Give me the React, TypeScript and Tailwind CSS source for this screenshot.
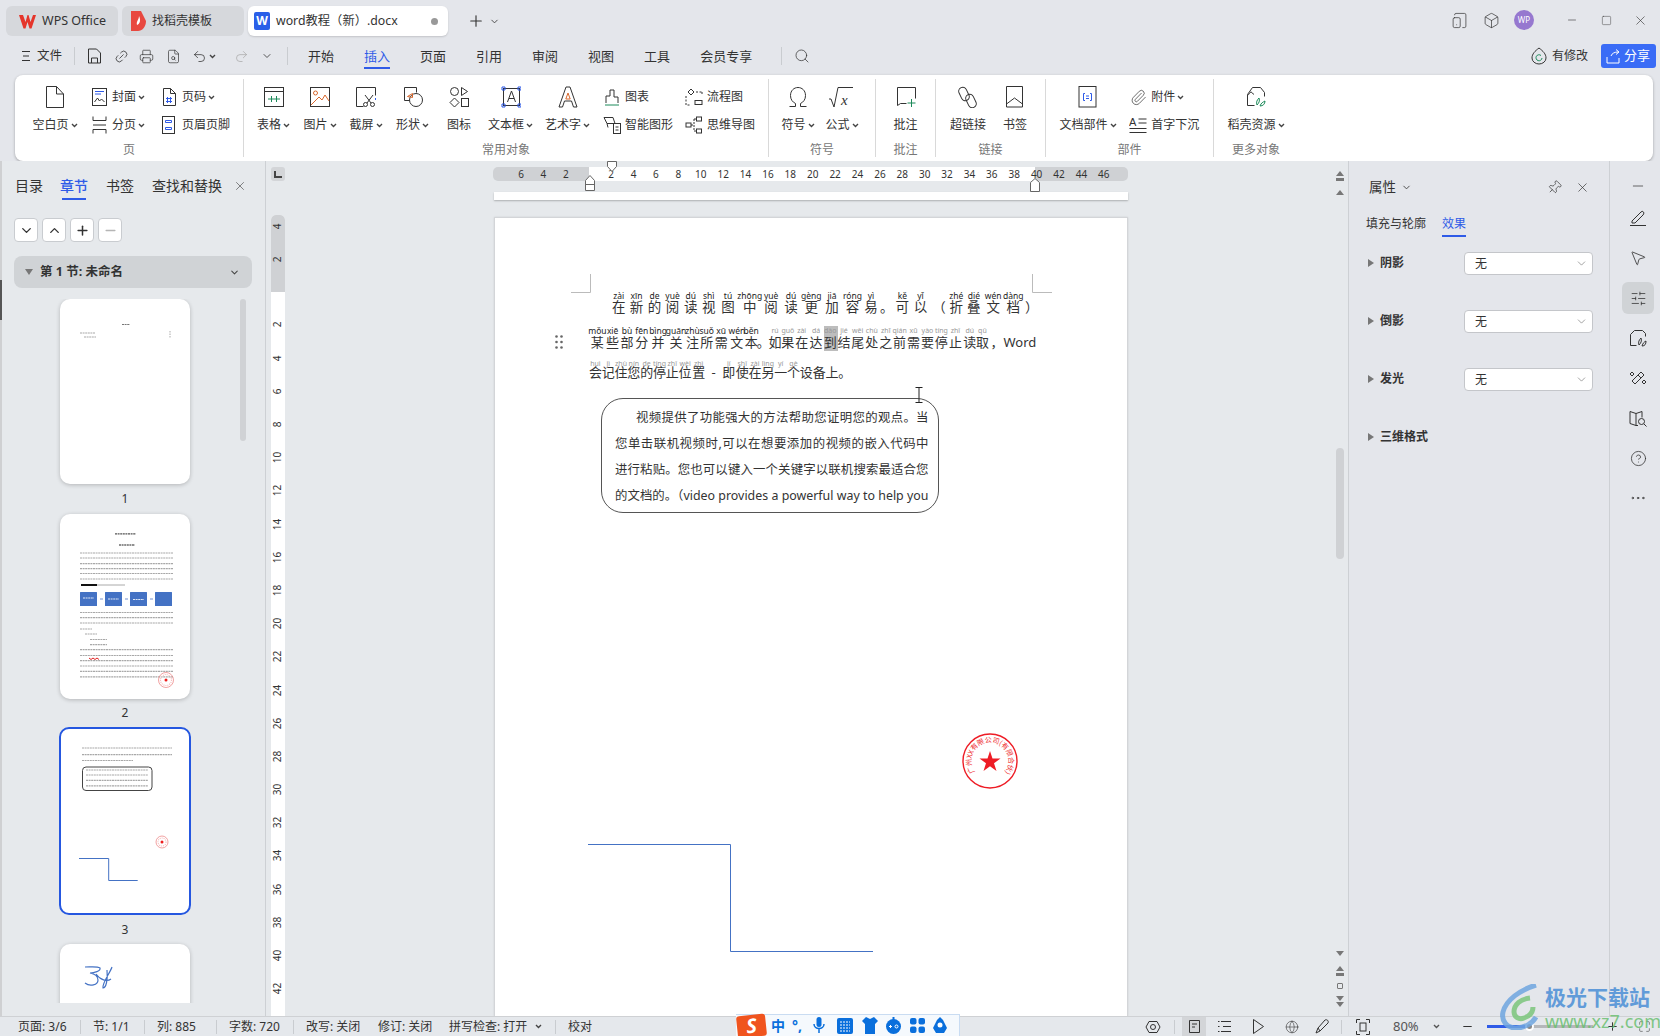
import { ReactNode } from "react"
import {
  Box, ChevronDown, ChevronUp, CircleHelp, Ellipsis, FileSearch, Globe, Link2, Maximize, Minus, MousePointer2,
  Paperclip, Pin, Plus, Printer, Redo2, Search, SlidersHorizontal, Square, TabletSmartphone, Undo2, X,
} from "lucide-react"

const PAGE_LEFT = 495
const BLUE = "#2f5be7"

const Caret = ({ color = "#444" }: { color?: string }) => (
  <svg width="7" height="5" viewBox="0 0 7 5" fill="none" stroke={color} strokeWidth="1.4" className="ml-[2px] shrink-0">
    <path d="M1 1l2.5 2.5L6 1" />
  </svg>
)

const Ic = ({ w = 20, h = 22, children }: { w?: number; h?: number; children: ReactNode }) => (
  <svg width={w} height={h} viewBox={`0 0 ${w} ${h}`} fill="none" stroke="#333" strokeWidth="1" className="shrink-0">
    {children}
  </svg>
)

// ribbon icons, large ones
const big: Record<string, ReactNode> = {
  blank: <Ic><path d="M1.5 .5h10l7 7.5v13.5h-17z M11.5 .5v7.5h7" /></Ic>,
  table: (
    <Ic>
      <rect x=".5" y="1.5" width="19" height="19" />
      <path d="M.5 5.5h19" />
      <path d="M4 13h12M7.5 10v6M12.5 10v6" stroke="#1c8a5a" />
    </Ic>
  ),
  picture: (
    <Ic>
      <rect x=".5" y="1.5" width="19" height="19" />
      <circle cx="5.5" cy="7" r="2" stroke="#d8672c" />
      <path d="M1 19l8-8 3 3 3-5 4 6" stroke="#d8672c" />
    </Ic>
  ),
  shot: (
    <Ic>
      <path d="M.5 20.5v-19h19v8M.5 20.5h7" />
      <path d="M19.5 12v3" strokeDasharray="2 1" stroke="#2f5be7" />
      <path d="M9 9l6 8M17 9l-6 8" />
      <circle cx="9.5" cy="18.5" r="2" />
      <circle cx="16.5" cy="18.5" r="2" />
    </Ic>
  ),
  shape: (
    <Ic>
      <path d="M1.5 1.5h12v5M1.5 1.5v13h5" />
      <circle cx="13" cy="14" r="6.5" />
      <path d="M4.5 10.5l5-3v4z" stroke="#d8672c" />
    </Ic>
  ),
  icon: (
    <Ic>
      <circle cx="5.5" cy="5.5" r="4" />
      <path d="M12.5 1.5l6 4-6 4z" />
      <path d="M5.5 12l4.5 4.5-4.5 4.5-4.5-4.5z" />
      <rect x="12.5" y="12.5" width="7" height="8" />
    </Ic>
  ),
  textbox: (
    <Ic>
      <rect x="2.5" y="2.5" width="16" height="17" />
      <path d="M6.5 16L10.5 5l4 11M8 12.5h5" />
      <path d="M1 1h3v3H1zM17 1h3v3h-3zM1 18h3v3H1zM17 18h3v3h-3z" stroke={BLUE} />
    </Ic>
  ),
  art: (
    <Ic>
      <path d="M1 21L8 1h4l7 20h-3.5l-2-6h-7l-2 6z" />
      <path d="M10 7l2.2 6H7.800z" stroke="#d8672c" />
    </Ic>
  ),
  omega: (
    <Ic>
      <path d="M1.500 20.500h6v-3c-3-1.500-5-4-5-8 0-5 3.500-8 7.500-8s7.500 3 7.500 8c0 4-2 6.500-5 8v3h6" />
    </Ic>
  ),
  formula: (
    <Ic w={26}>
      <path d="M0 13h2l3 8L9 1.500h15" />
      <text x="12" y="19" fontSize="15" fontStyle="italic" fontFamily="Liberation Serif" fill="#333" stroke="none">x</text>
    </Ic>
  ),
  comment: (
    <Ic>
      <path d="M1.500 19.500v-18h18v11M1.500 19.500l3-2h6" />
      <path d="M15.500 13v8M11.500 17h8" stroke="#1c8a5a" />
    </Ic>
  ),
  link: (
    <Ic>
      <rect x="2" y="1" width="8" height="14" rx="4" transform="rotate(-25 6 8)" />
      <rect x="9" y="8" width="8" height="14" rx="4" transform="rotate(-25 13 15)" />
    </Ic>
  ),
  bookmark: <Ic><path d="M1.500 .5h16v20.500h-16z M1.500 18l8-6 8 6" /></Ic>,
  part: (
    <Ic>
      <rect x="1" y=".5" width="17" height="20.500" />
      <path d="M7 7.500H5.500v7H7M12 7.500h1.500v7H12M8 10h3M8 12.500h3" stroke={BLUE} />
    </Ic>
  ),
  shell: (
    <Ic>
      <path d="M1.500 19.500v-11l5-7h8l4 5v4M1.500 19.500h7M1.500 9c2 0 2-3 3.500-3s1.500 3 3 2" />
      <path d="M11 19c-1-3 0-5 2-7 1 3 0 5-2 7zM14 20c1-3 3-4 5-5 0 3-2 5-5 5z" stroke="#1c8a5a" />
    </Ic>
  ),
}

// ribbon icons, small ones
const small: Record<string, ReactNode> = {
  cover: (
    <Ic w={15} h={18}>
      <rect x=".5" y=".5" width="14" height="17" />
      <path d="M3 3.500h9M3 6h6" stroke={BLUE} />
      <path d="M2.500 14l3-4 2 3 2-2 3 3" />
    </Ic>
  ),
  pagebreak: (
    <Ic w={15} h={18}>
      <path d="M1 .5v4h13v-4M1 17.500v-4h13v4" />
      <path d="M1 9h13" />
    </Ic>
  ),
  pageno: (
    <Ic w={15} h={18}>
      <path d="M1.500 .5h7l5 5v12h-12zM8.500 .5v5h5" />
      <path d="M5.500 9v6M8.500 9v6M4 10.500h6M4 13.500h6" stroke={BLUE} />
    </Ic>
  ),
  header: (
    <Ic w={15} h={18}>
      <rect x="1.500" y=".5" width="12" height="17" />
      <path d="M4.500 4.500h6v2h-6zM4.500 11.500h6v2h-6z" stroke={BLUE} />
    </Ic>
  ),
  chart: (
    <Ic w={16} h={18}>
      <path d="M2 15V8h4V2h4v7h4v6" />
      <path d="M1 17h14" stroke="#1c8a5a" />
    </Ic>
  ),
  smart: (
    <Ic w={18} h={18}>
      <path d="M1 1.500h9l2 6h-8zM4 7.500l1 4" />
      <rect x="10.500" y="7.500" width="7" height="10" />
      <path d="M12.500 11h3M12.500 14h3" />
    </Ic>
  ),
  flow: (
    <Ic w={18} h={18}>
      <path d="M6 1l3 3-3 3-3-3z" />
      <path d="M11 4h6M1 8v9h5M17 4v2" strokeDasharray="2 1.500" />
      <rect x="10" y="12.500" width="7" height="4" />
    </Ic>
  ),
  mind: (
    <Ic w={18} h={18}>
      <rect x="1" y="7" width="5" height="4" />
      <rect x="11.500" y="1" width="5" height="4" />
      <rect x="11.500" y="13" width="5" height="4" />
      <path d="M6 9h3M9 3v12M9 3h2.500M9 15h2.500" strokeDasharray="2 1" />
    </Ic>
  ),
  clip: <Paperclip size={17} strokeWidth={1} color="#333" className="shrink-0" />,
  dropcap: (
    <Ic w={18} h={18}>
      <text x="0" y="10" fontSize="11" fontFamily="Liberation Sans" fill="#333" stroke="none">A</text>
      <path d="M9.500 3h8M9.500 7h8M.5 12.500h17M.5 16.500h17" />
    </Ic>
  ),
}

const Big = ({ icon, label, caret, w }: { icon: string; label: string; caret?: boolean; w: string }) => (
  <div className={`flex flex-col items-center ${w}`}>
    <div className="mt-[4px] flex h-[28px] items-center justify-center">{big[icon]}</div>
    <div className="mt-[5px] flex h-[18px] items-center whitespace-nowrap text-[12px] text-[#333]">
      {label}
      {caret && <Caret />}
    </div>
  </div>
)

const Small = ({ icon, label, caret }: { icon: string; label: string; caret?: boolean }) => (
  <div className="flex h-[18px] items-center whitespace-nowrap text-[12px] text-[#333]">
    <span className="flex w-[18px] justify-center">{small[icon]}</span>
    <span className="ml-[4px]">{label}</span>
    {caret && <Caret />}
  </div>
)

const SmallCol = ({ children, w }: { children: ReactNode; w: string }) => (
  <div className={`flex flex-col gap-[10px] pt-[9px] ${w}`}>{children}</div>
)

const Group = ({ label, w, pl, children, last }: { label: string; w: string; pl: string; children: ReactNode; last?: boolean }) => (
  <div className={`relative flex h-[78px] flex-col ${w} ${last ? "" : "border-r border-[#d9d9d9]"}`}>
    <div className={`flex h-[67px] ${pl}`}>{children}</div>
    <div className="text-center text-[12px] leading-[14px] text-[#777]">{label}</div>
  </div>
)

const Ribbon = () => (
  <div className="ml-[15px] flex h-[86px] w-[1638px] items-start rounded-[8px] bg-white pt-[4px] shadow-[0_1px_3px_rgba(0,0,0,0.3)]">
    <Group label="页" w="w-[229px]" pl="pl-[15px]">
      <Big icon="blank" label="空白页" caret w="w-[50px]" />
      <SmallCol w="w-[70px] ml-[10px]">
        <Small icon="cover" label="封面" caret />
        <Small icon="pagebreak" label="分页" caret />
      </SmallCol>
      <SmallCol w="w-[70px]">
        <Small icon="pageno" label="页码" caret />
        <Small icon="header" label="页眉页脚" />
      </SmallCol>
    </Group>
    <Group label="常用对象" w="w-[525px]" pl="pl-[6px]">
      <Big icon="table" label="表格" caret w="w-[47px]" />
      <Big icon="picture" label="图片" caret w="w-[46px]" />
      <Big icon="shot" label="截屏" caret w="w-[46px]" />
      <Big icon="shape" label="形状" caret w="w-[47px]" />
      <Big icon="icon" label="图标" w="w-[46px]" />
      <Big icon="textbox" label="文本框" caret w="w-[57px]" />
      <Big icon="art" label="艺术字" caret w="w-[57px]" />
      <SmallCol w="w-[82px] ml-[7px]">
        <Small icon="chart" label="图表" />
        <Small icon="smart" label="智能图形" />
      </SmallCol>
      <SmallCol w="w-[80px]">
        <Small icon="flow" label="流程图" />
        <Small icon="mind" label="思维导图" />
      </SmallCol>
    </Group>
    <Group label="符号" w="w-[107px]" pl="pl-[6px]">
      <Big icon="omega" label="符号" caret w="w-[46px]" />
      <Big icon="formula" label="公式" caret w="w-[42px]" />
    </Group>
    <Group label="批注" w="w-[60px]" pl="">
      <Big icon="comment" label="批注" w="w-[60px]" />
    </Group>
    <Group label="链接" w="w-[110px]" pl="pl-[8px]">
      <Big icon="link" label="超链接" w="w-[48px]" />
      <Big icon="bookmark" label="书签" w="w-[46px]" />
    </Group>
    <Group label="部件" w="w-[168px]" pl="pl-[10px]">
      <Big icon="part" label="文档部件" caret w="w-[65px]" />
      <SmallCol w="w-[85px] ml-[9px]">
        <Small icon="clip" label="附件" caret />
        <Small icon="dropcap" label="首字下沉" />
      </SmallCol>
    </Group>
    <Group label="更多对象" w="w-[84px]" pl="pl-[10px]" last>
      <Big icon="shell" label="稻壳资源" caret w="w-[64px]" />
    </Group>
  </div>
)

const Tab = ({ w, active, children }: { w: string; active?: boolean; children: ReactNode }) => (
  <div className={`flex h-[30px] items-center rounded-[6px] ${w} ${active ? "bg-white shadow-[0_1px_2px_rgba(0,0,0,0.15)]" : "bg-[#d6d8dc]"}`}>
    {children}
  </div>
)

const TabBar = () => (
  <div className="flex h-[38px] items-start pl-[6px] pt-[6px] text-[12.500px] text-[#333]">
    <Tab w="w-[112px] pl-[13px]">
      <svg width="17" height="15" viewBox="0 0 17 15" fill="#e5352b">
        <path d="M0 1h4l2.500 7 2-7h1l2 7L14 1h3l-4.500 13.500h-2L8.500 8 6.500 14.500h-2z" />
      </svg>
      <span className="ml-[6px] whitespace-nowrap">WPS Office</span>
    </Tab>
    <Tab w="w-[122px] ml-[4px] pl-[8px]">
      <svg width="16" height="20" viewBox="0 0 16 20">
        <path d="M1 0h10l5 10c0 6-4 10-8 10H1z" fill="#e8483f" />
        <path d="M9 5c0 4-3 5-2 9 3-1 4-5 2-9z" fill="#fff" />
      </svg>
      <span className="ml-[6px] whitespace-nowrap text-[12px]">找稻壳模板</span>
    </Tab>
    <Tab w="w-[200px] ml-[4px] pl-[6px]" active>
      <span className="flex h-[18px] w-[16px] items-center justify-center rounded-[2px] bg-[#2a5fe8] text-[12px] font-bold text-white">W</span>
      <span className="ml-[6px] whitespace-nowrap text-[12.300px]">word教程（新）.docx</span>
      <span className="ml-auto mr-[10px] h-[7px] w-[7px] rounded-full bg-[#999]" />
    </Tab>
    <div className="ml-[19px] flex h-[30px] items-center">
      <Plus size={18} strokeWidth={1.5} color="#333" />
      <ChevronDown size={11} className="ml-[4px]" color="#444" />
    </div>
    <div className="ml-auto flex h-[28px] items-center">
      <TabletSmartphone size={17} strokeWidth={1} color="#333" />
      <Box size={17} strokeWidth={1} color="#333" className="ml-[15px]" />
      <span className="ml-[14px] flex h-[20px] w-[20px] items-center justify-center rounded-full bg-[#9678cf] text-[8px] text-white">WP</span>
      <Minus size={12} strokeWidth={1.2} color="#333" className="ml-[32px]" />
      <Square size={11} strokeWidth={1} color="#333" className="ml-[23px]" />
      <X size={15} strokeWidth={1} color="#333" className="ml-[21px] mr-[12px]" />
    </div>
  </div>
)

const MenuTab = ({ label, active }: { label: string; active?: boolean }) => (
  <div className={`relative ml-[30px] whitespace-nowrap text-[13px] leading-[24px] ${active ? "text-[#2f5be7]" : "text-[#333]"}`}>
    {label}
    {active && <span className="absolute -bottom-[1px] left-0 h-[2px] w-full bg-[#2f5be7]" />}
  </div>
)

const Sep = ({ h = "h-[18px]" }: { h?: string }) => <span className={`w-px bg-[#c9ccd0] ${h}` } />

const Toolbar = () => (
  <div className="mb-[1px] flex h-[36px] items-center text-[12.500px] text-[#333]">
    <svg width="8" height="10" viewBox="0 0 8 10" fill="none" stroke="#333" className="ml-[22px]">
      <path d="M0 .5h8M1 5h6M0 9.500h8" />
    </svg>
    <span className="ml-[7px]">文件</span>
    <span className="ml-[12px] flex"><Sep /></span>
    <svg width="15" height="16" viewBox="0 0 15 16" fill="none" stroke="#333" className="ml-[12px]">
      <path d="M1.500 1h8l4 4v10h-12zM4.500 15v-5h6v5" />
    </svg>
    <Link2 size={15} strokeWidth={1.2} color="#333" className="ml-[12px] -rotate-45" />
    <Printer size={15} strokeWidth={1.1} color="#333" className="ml-[10px]" />
    <FileSearch size={15} strokeWidth={1.1} color="#333" className="ml-[12px]" />
    <Undo2 size={15} strokeWidth={1.2} color="#333" className="ml-[11px]" />
    <Caret />
    <Redo2 size={15} strokeWidth={1.2} color="#aaa" className="ml-[18px]" />
    <ChevronDown size={12} color="#555" className="ml-[12px]" />
    <span className="ml-[14px] flex"><Sep /></span>
    <div className="-ml-[10px] flex">
      <MenuTab label="开始" />
      <MenuTab label="插入" active />
      <MenuTab label="页面" />
      <MenuTab label="引用" />
      <MenuTab label="审阅" />
      <MenuTab label="视图" />
      <MenuTab label="工具" />
      <MenuTab label="会员专享" />
    </div>
    <span className="ml-[29px] flex"><Sep /></span>
    <Search size={16} strokeWidth={1.1} color="#333" className="ml-[12px]" />
    <div className="ml-auto flex items-center">
      <svg width="16" height="18" viewBox="0 0 16 18" fill="none" stroke="#333">
        <path d="M8 1c-4 3-7 6-7 10a7 6 0 0 0 14 0c0-4-3-7-7-10z" />
        <path d="M11 11a3 3 0 1 1-1-2.500" stroke="#1c8a5a" />
      </svg>
      <span className="ml-[5px] text-[12px]">有修改</span>
      <div className="ml-[13px] mr-[4px] flex h-[24px] w-[55px] items-center rounded-[3px] bg-[#3a6cf6] pl-[5px] text-white">
        <svg width="15" height="15" viewBox="0 0 15 15" fill="none" stroke="#fff">
          <path d="M1 8v6h12V9M5 7c1-3 4-4 7-4M10 .5L13 3l-3 2.500" />
        </svg>
        <span className="ml-[3px] text-[13px]">分享</span>
      </div>
    </div>
  </div>
)

// tiny grey text lines inside a page thumbnail
const Lines = ({ ys, x1 = 20, x2 = 113, stroke = "#a8a8a8" }: { ys: number[]; x1?: number; x2?: number; stroke?: string }) => (
  <>
    {ys.map((y) => (
      <path key={y} d={`M${x1} ${y}H${x2}`} stroke={stroke} strokeWidth="1.200" strokeDasharray="2 .6" />
    ))}
  </>
)

const MiniStamp = ({ cx, cy, r }: { cx: number; cy: number; r: number }) => (
  <>
    <circle cx={cx} cy={cy} r={r} fill="none" stroke="#ee8a8a" strokeWidth=".8" />
    <circle cx={cx} cy={cy} r={r - 2} fill="none" stroke="#f6bcbc" strokeWidth="1.200" strokeDasharray="1 1" />
    <circle cx={cx} cy={cy} r="1.500" fill="#ee1c1c" />
  </>
)

const Thumb1 = () => (
  <svg width="130" height="185" viewBox="0 0 130 185" className="block">
    <Lines ys={[25.500]} x1={62} x2={70} stroke="#777" />
    <Lines ys={[34]} x1={20} x2={35} />
    <Lines ys={[38]} x1={24} x2={36} />
    <path d="M110 32v7" stroke="#aaa" strokeDasharray="1.500 1" />
  </svg>
)

const Thumb2 = () => (
  <svg width="130" height="185" viewBox="0 0 130 185" className="block">
    <Lines ys={[19.800]} x1={55} x2={76} stroke="#555" />
    <Lines ys={[31]} x1={59} x2={75} stroke="#222" />
    <Lines ys={[39, 44, 49.600, 54.700, 59.500, 65]} />
    <path d="M21 71H37" stroke="#111" strokeWidth="2" />
    <path d="M37 71H65" stroke="#aaa" strokeWidth="1" />
    {[20, 45, 70, 95].map((x) => (
      <rect key={x} x={x} y="78" width="17" height="14" fill="#4472c4" rx=".5" />
    ))}
    {[40, 65, 90].map((x) => (
      <path key={x} d={`M${x} 85h3`} stroke="#b9c8e8" strokeWidth="2" />
    ))}
    <Lines ys={[84]} x1={23} x2={34} stroke="#dfe7f6" />
    <Lines ys={[85]} x1={48} x2={59} stroke="#dfe7f6" />
    <Lines ys={[85.500]} x1={73} x2={84} stroke="#dfe7f6" />
    <Lines ys={[98.500, 103.600, 109]} />
    <Lines ys={[115]} x1={20} x2={32} />
    <Lines ys={[120]} x1={25} x2={37} />
    <Lines ys={[125.500, 130.600]} x1={30} x2={47} />
    <Lines ys={[135.700, 141.500, 146.700, 152, 157.300, 162.800]} />
    <path d="M29 144l2 1.500 2-1.500 2 1.500 2-1.500 2 1.500" stroke="#e02020" fill="none" strokeWidth="1" />
    <MiniStamp cx={106} cy={166} r={7.500} />
  </svg>
)

const Thumb3 = () => (
  <svg width="128" height="184" viewBox="1 2 128 184" className="block">
    <Lines ys={[21, 27.700]} x1={22} x2={112} />
    <Lines ys={[33.500]} x1={22} x2={73} />
    <rect x="22.500" y="40" width="69.500" height="23.500" rx="3.500" fill="none" stroke="#444" strokeWidth="1" />
    <Lines ys={[43, 48, 53.400, 58.800]} x1={26} x2={88} />
    <MiniStamp cx={102} cy={115} r={6} />
    <path d="M19 131.500H48.700V153.500H77.700" fill="none" stroke="#4472c4" strokeWidth="1" />
  </svg>
)

const Thumb4 = () => (
  <svg width="130" height="185" viewBox="0 0 130 185" className="block">
    <path
      d="M25 23c6 0 12-1 15 1 1 3-6 5-10 5 5 1 8 3 8 7 0 5-8 7-13 3M52 23c-2 6-10 16-9 21 3 0 5-8 4-18M36 30c4 6 11 8 15 5"
      fill="none"
      stroke="#4472c4"
      strokeWidth="1.200"
    />
  </svg>
)

const LeftBtn = ({ children }: { children: ReactNode }) => (
  <div className="flex h-[24px] w-[24px] items-center justify-center rounded-[4px] border border-[#c9ccd0] bg-white">{children}</div>
)

const LeftPanel = () => (
  <div className="relative flex h-full w-[266px] shrink-0 flex-col border-l-2 border-r border-l-[#cfd0d2] border-r-[#cdd0d4] bg-[#e6e9ec]">
    <span className="absolute -left-[2px] top-[119px] h-[40px] w-[2px] bg-[#555]" />
    <div className="flex h-[38px] items-end pb-[2px] pl-[13px] text-[14px] leading-[22px] text-[#333]">
      <span>目录</span>
      <span className="relative ml-[17px] font-medium text-[#2f5be7]">
        章节
        <i className="absolute -bottom-[3px] left-[2px] h-[2px] w-[24px] bg-[#2f5be7]" />
      </span>
      <span className="ml-[18px]">书签</span>
      <span className="ml-[18px]">查找和替换</span>
      <X size={14} strokeWidth={1} color="#333" className="mb-[4px] ml-[11px]" />
    </div>
    <div className="ml-[12px] mt-[19px] flex gap-[4px]">
      <LeftBtn><ChevronDown size={15} strokeWidth={2.2} color="#333" /></LeftBtn>
      <LeftBtn><ChevronUp size={15} strokeWidth={2.2} color="#333" /></LeftBtn>
      <LeftBtn><Plus size={15} strokeWidth={2.4} color="#333" /></LeftBtn>
      <LeftBtn><Minus size={15} strokeWidth={2.2} color="#b5b5b5" /></LeftBtn>
    </div>
    <div className="ml-[12px] mt-[14px] flex h-[32px] w-[238px] items-center rounded-[8px] bg-[#d0d3d6] pl-[11px] pr-[12px] text-[12.500px] font-bold text-[#333]">
      <svg width="8" height="6" viewBox="0 0 8 6" fill="#777"><path d="M0 0h8L4 6z" /></svg>
      <span className="ml-[7px]">第 1 节: 未命名</span>
      <ChevronDown size={11} strokeWidth={2.2} color="#444" className="ml-auto" />
    </div>
    <div className="mt-[11px] flex h-[704px] overflow-hidden">
      <div className="flex w-[238px] flex-col items-start text-[12px] text-[#333]">
        <div className="ml-[58px] shrink-0 overflow-hidden rounded-[10px] bg-white shadow-[0_1px_4px_rgba(0,0,0,0.22)]"><Thumb1 /></div>
        <div className="ml-[58px] flex h-[30px] w-[130px] shrink-0 items-center justify-center">1</div>
        <div className="ml-[58px] shrink-0 overflow-hidden rounded-[10px] bg-white shadow-[0_1px_4px_rgba(0,0,0,0.22)]"><Thumb2 /></div>
        <div className="ml-[58px] flex h-[28px] w-[130px] shrink-0 items-center justify-center">2</div>
        <div className="ml-[57px] shrink-0 overflow-hidden rounded-[10px] border-2 border-[#2557e0] bg-white"><Thumb3 /></div>
        <div className="ml-[58px] flex h-[29px] w-[130px] shrink-0 items-center justify-center">3</div>
        <div className="ml-[58px] shrink-0 overflow-hidden rounded-[10px] bg-white shadow-[0_1px_4px_rgba(0,0,0,0.22)]"><Thumb4 /></div>
      </div>
      <div className="h-[142px] w-[6px] rounded-full bg-[#d0d2d5]" />
    </div>
  </div>
)

const HSlot = ({ n }: { n: number }) => <span className="flex w-[22.400px] shrink-0 justify-center">{n}</span>

const HRuler = () => (
  <div className="relative ml-[208px] flex h-[14px] w-[635px] text-[10px] leading-[14px] text-[#333]">
    <div className="flex w-[96px] rounded-l-[5px] bg-[#cfd1d4] pl-[16.800px]">
      {[6, 4, 2].map((n, i) => <HSlot key={i} n={n} />)}
    </div>
    <div className="relative z-10 flex w-[446px] bg-white pl-[11px]">
      {Array.from({ length: 20 }, (_, i) => (i + 1) * 2).map((n) => <HSlot key={n} n={n} />)}
    </div>
    <div className="flex flex-1 rounded-r-[5px] bg-[#cfd1d4] pl-[12.800px]">
      {[42, 44, 46].map((n) => <HSlot key={n} n={n} />)}
    </div>
    <svg width="12" height="15" viewBox="0 0 12 15" fill="#fff" stroke="#666" className="absolute left-[113px] -top-[6px] z-20">
      <path d="M1.500 .5h9v5l-4.500 5-4.500-5z" />
    </svg>
    <svg width="12" height="17" viewBox="0 0 12 17" fill="#fff" stroke="#666" className="absolute left-[91px] top-[8px] z-20">
      <path d="M6 .5l4.500 5v10h-9v-10zM1.500 9.500h9" />
    </svg>
    <svg width="12" height="14" viewBox="0 0 12 14" fill="#fff" stroke="#666" className="absolute left-[536px] top-[11px] z-20">
      <path d="M6 .5l4.500 4v9h-9v-9z" />
    </svg>
  </div>
)

const VSlot = ({ n }: { n: number }) => (
  <span className="flex h-[33.200px] shrink-0 items-center justify-center">
    <span className="-rotate-90">{n}</span>
  </span>
)

const VRuler = () => (
  <div className="flex h-[801px] w-[14px] shrink-0 flex-col overflow-hidden rounded-t-[5px] bg-white text-[10px] text-[#333]">
    <div className="flex h-[77px] shrink-0 flex-col overflow-hidden bg-[#cfd1d4]">
      <div className="-mt-[5.500px]">
        <VSlot n={4} />
        <VSlot n={2} />
      </div>
    </div>
    <div className="pt-[16.400px]">
      {Array.from({ length: 21 }, (_, i) => (i + 1) * 2).map((n) => <VSlot key={n} n={n} />)}
    </div>
  </div>
)

type Ruby = [string, string, number]

// the centres below were read off a crop, this puts them back on the page's x axis
const fix = (c: number) => 480 + (c - 480) * 0.9863

const RubyLine = ({ items, dark, size, tight }: { items: Ruby[]; dark: number; size: string; tight?: boolean }) => {
  const cs = items.map((i) => fix(i[2]))
  const edges = cs.map((c, i) => {
    const right = i < cs.length - 1 ? (c + cs[i + 1]) / 2 : c + (c - cs[i - 1]) / 2
    const left = i > 0 ? (cs[i - 1] + c) / 2 : c - (right - c)
    return [left, right]
  })
  return (
    <div className="relative flex" style={{ marginLeft: edges[0][0] - PAGE_LEFT }}>
      {items.map(([ch, py], i) => (
        <div key={i} className="flex shrink-0 flex-col items-center" style={{ width: edges[i][1] - edges[i][0] }}>
          <span className={`h-[8px] translate-y-[1px] whitespace-nowrap leading-[8px] ${i < dark ? "text-[8.500px] text-[#222]" : "text-[7px] text-[#999]"}`}>{py}</span>
          <span className={`h-[16px] whitespace-nowrap leading-[16px] text-[#333] ${size} ${tight ? "-mt-[3px]" : ""}`}>{ch}</span>
        </div>
      ))}
    </div>
  )
}

const line1: Ruby[] = [
  ["在", "zài", 620.6], ["新", "xīn", 638.7], ["的", "de", 657], ["阅", "yuè", 675], ["读", "dú", 694], ["视", "shì", 712], ["图", "tú", 730],
  ["中", "zhōng", 754], ["阅", "yuè", 776], ["读", "dú", 795], ["更", "gèng", 816], ["加", "jiā", 837], ["容", "róng", 858], ["易", "yì", 878],
  ["。", "", 892], ["可", "kě", 907.6], ["以", "yǐ", 926], ["（", "", 947], ["折", "zhé", 962], ["叠", "dié", 981], ["文", "wén", 999.5], ["档", "dàng", 1022], ["）", "", 1039.6],
]

const line2: Ruby[] = [
  ["某", "mǒu", 599], ["些", "xiē", 615], ["部", "bù", 629], ["分", "fēn", 643.5], ["并", "bìng", 660], ["关", "guān", 679], ["注", "zhù", 697], ["所", "suǒ", 709.5],
  ["需", "xū", 724], ["文", "wén", 741], ["本", "běn", 756], ["。", "", 767], ["如", "rú", 779], ["果", "guǒ", 792], ["在", "zài", 806], ["达", "dá", 821], ["到", "dào", 835.6],
  ["结", "jié", 849], ["尾", "wěi", 863], ["处", "chù", 877.6], ["之", "zhī", 891.5], ["前", "qián", 905.7], ["需", "xū", 919.6], ["要", "yào", 934], ["停", "tíng", 948],
  ["止", "zhǐ", 962], ["读", "dú", 977], ["取", "qǔ", 991], ["，", "", 999.5], ["Word", "", 1027.6],
]

const line3: Ruby[] = [
  ["会", "huì", 597], ["记", "jì", 610], ["住", "zhù", 623], ["您", "nín", 636], ["的", "de", 649], ["停", "tíng", 662], ["止", "zhǐ", 675], ["位", "wèi", 688], ["置", "zhì", 701],
  ["-", "", 717], ["即", "jí", 733], ["使", "shǐ", 746], ["在", "zài", 759], ["另", "lìng", 772], ["一", "yí", 785], ["个", "gè", 798], ["设", "", 811], ["备", "", 824], ["上", "", 837], ["。", "", 850],
]

const boxLines = [
  "视频提供了功能强大的方法帮助您证明您的观点。当",
  "您单击联机视频时,可以在想要添加的视频的嵌入代码中",
  "进行粘贴。您也可以键入一个关键字以联机搜索最适合您",
  "的文档的。（video provides a powerful way to help you",
]

const Stamp = () => (
  <svg width="60" height="60" viewBox="0 0 60 60" className="absolute left-[465px] top-[513px]">
    <circle cx="30" cy="30" r="27" fill="none" stroke="#ee1c25" strokeWidth="1.400" />
    <defs>
      <path id="stamp-arc" d="M15 41a18.600 18.600 0 1 1 30 0" />
    </defs>
    <text fontSize="7" fill="#ee1c25" fontFamily="Noto Sans CJK SC, sans-serif">
      <textPath href="#stamp-arc" textLength="82">广州XX有限公司(有限合伙)</textPath>
    </text>
    <path d="M30 20l2.500 7.500h8l-6.500 4.700 2.500 7.800-6.500-4.800-6.500 4.800 2.500-7.800-6.500-4.700h8z" fill="#ee1c25" />
  </svg>
)

const Page = () => (
  <div className="relative ml-[209px] mt-[2px] flex h-[800px] w-[634px] shrink-0 flex-col border border-[#d3d5d8] bg-white pt-[73px] shadow-[0_0_2px_rgba(0,0,0,0.1)]">
    <svg width="20" height="20" viewBox="0 0 20 20" fill="none" stroke="#bbb" className="absolute left-[76px] top-[56px]">
      <path d="M19.500 0v18.500H0" />
    </svg>
    <svg width="20" height="20" viewBox="0 0 20 20" fill="none" stroke="#bbb" className="absolute left-[537px] top-[56px]">
      <path d="M.5 0v18.500H20" />
    </svg>
    <span className="absolute left-[329px] top-[108px] h-[25px] w-[14px] bg-[#bdbdbd]" />
    <svg width="8" height="14" viewBox="0 0 8 14" fill="#666" className="absolute left-[60px] top-[117px]">
      <circle cx="1.500" cy="1.500" r="1.300" /><circle cx="6.500" cy="1.500" r="1.300" />
      <circle cx="1.500" cy="7" r="1.300" /><circle cx="6.500" cy="7" r="1.300" />
      <circle cx="1.500" cy="12.500" r="1.300" /><circle cx="6.500" cy="12.500" r="1.300" />
    </svg>
    <RubyLine items={line1} dark={99} size="text-[13.500px]" />
    <div className="mt-[11px]"><RubyLine items={line2} dark={11} size="text-[13px]" /></div>
    <div className="mt-[9px]"><RubyLine items={line3} dark={0} size="text-[13px]" tight /></div>
    <div className="ml-[106px] mt-[18px] h-[115px] w-[338px] shrink-0 rounded-[22px] border-[1.500px] border-[#555] pl-[13px] pr-[9.500px] pt-[6px] text-[12.400px] leading-[26px] text-[#333]">
      {boxLines.map((l, i) => (
        <div key={i} className={`whitespace-nowrap text-justify [text-align-last:justify] ${i === 0 ? "pl-[21px]" : ""}`}>{l}</div>
      ))}
    </div>
    <svg width="8" height="16" viewBox="0 0 8 16" fill="none" stroke="#222" className="absolute left-[420px] top-[169px]">
      <path d="M.5 .5h7M4 .5v15M.5 15.500h7" />
    </svg>
    <Stamp />
    <svg width="290" height="110" viewBox="0 0 290 110" fill="none" stroke="#4472c4" className="absolute left-[92px] top-[625px]">
      <path d="M1 1.500H143.500V108.500H286" />
    </svg>
  </div>
)

const Tri = ({ up, double }: { up?: boolean; double?: boolean }) => (
  <svg width="8" height={double ? 11 : 6} viewBox={double ? "0 0 8 11" : "0 0 8 6"} fill="#777" className="block">
    {up ? <path d="M4 0l4 5H0z" /> : <path d="M0 0h8L4 5z" />}
    {double && (up ? <path d="M0 7h8v3H0z" /> : <path d="M0 6h8L4 11z" />)}
  </svg>
)

const Canvas = () => (
  <div className="flex h-full w-[1083px] shrink-0 border-r border-[#cdd0d4] bg-[#e6e9ec]">
    <div className="flex h-full w-[1070px] shrink-0 flex-col pt-[6px]">
      <div className="flex h-[14px]">
        <span className="ml-[5px] flex h-[14px] w-[14px] items-center justify-center rounded-[3px] bg-[#d3d5d8]">
          <svg width="8" height="7" viewBox="0 0 8 7" fill="none" stroke="#444" strokeWidth="2"><path d="M1 0v6h7" /></svg>
        </span>
        <HRuler />
      </div>
      <div className="ml-[228px] mt-[11px] h-[8px] w-[634px] shrink-0 bg-white shadow-[0_1px_2px_rgba(0,0,0,0.25)]" />
      <div className="mt-[15px] flex h-[801px] overflow-hidden pl-[5px]">
        <VRuler />
        <Page />
      </div>
    </div>
    <div className="flex w-[8px] flex-col items-center pt-[10px]">
      <Tri up double />
      <span className="mt-[8px]"><Tri up /></span>
      <span className="mt-[252px] h-[111px] w-[8px] shrink-0 rounded-full bg-[#cfd1d4]" />
      <span className="mt-[392px]"><Tri /></span>
      <span className="mt-[9px]"><Tri up double /></span>
      <span className="mt-[6px] h-[6px] w-[6px] rounded-[1px] border border-[#777]" />
      <span className="mt-[7px]"><Tri double /></span>
    </div>
  </div>
)

const PropRow = ({ label, select = true }: { label: string; select?: boolean }) => (
  <div className="flex h-[58px] shrink-0 items-start">
    <div className="flex h-[22px] items-center">
      <svg width="6" height="8" viewBox="0 0 6 8" fill="#777"><path d="M0 0l6 4-6 4z" /></svg>
      <span className="ml-[6px] text-[12px] font-bold text-[#333]">{label}</span>
    </div>
    {select && (
      <div className="ml-auto flex h-[23px] w-[129px] items-center rounded-[4px] border border-[#c4c6ca] bg-white pl-[10px] pr-[4px] text-[12px] text-[#333]">
        无
        <ChevronDown size={13} strokeWidth={1} color="#555" className="ml-auto" />
      </div>
    )}
  </div>
)

const PropsPanel = () => (
  <div className="flex h-full w-[261px] shrink-0 flex-col border-r border-[#cdd0d4] bg-[#e4e6eb] pl-[17px] pr-[16px]">
    <div className="flex h-[52px] items-center pl-[3px] pt-[1px] text-[13.500px] text-[#333]">
      属性
      <ChevronDown size={11} strokeWidth={2} color="#444" className="ml-[5px]" />
      <Pin size={15} strokeWidth={1.1} color="#333" className="ml-auto rotate-45" />
      <X size={15} strokeWidth={1.1} color="#333" className="ml-[13px] mr-[3px]" />
    </div>
    <div className="flex h-[24px] items-start text-[12px] leading-[22px] text-[#333]">
      <span>填充与轮廓</span>
      <span className="relative ml-[16px] text-[#2f5be7]">
        效果
        <i className="absolute left-0 top-[22px] h-[2px] w-[24px] bg-[#2f5be7]" />
      </span>
    </div>
    <div className="mt-[15px] flex flex-col pl-[2px]">
      <PropRow label="阴影" />
      <PropRow label="倒影" />
      <PropRow label="发光" />
      <PropRow label="三维格式" select={false} />
    </div>
  </div>
)

const StripBtn = ({ children, active, cls = "" }: { children: ReactNode; active?: boolean; cls?: string }) => (
  <div className={`flex h-[32px] w-[32px] items-center justify-center rounded-[6px] ${active ? "bg-[#d0d3d6]" : ""} ${cls}`}>{children}</div>
)

const Strip = () => (
  <div className="flex h-full flex-1 flex-col items-start bg-[#e4e6eb] pl-[12px] pt-[9px]">
    <StripBtn><Minus size={16} strokeWidth={1.2} color="#444" /></StripBtn>
    <StripBtn>
      <svg width="18" height="16" viewBox="0 0 18 16" fill="none" stroke="#333">
        <path d="M3 11l9-9c2-2 4 1 2 3l-8 8H3zM1 15.500h16" />
      </svg>
    </StripBtn>
    <StripBtn cls="mt-[8px]"><MousePointer2 size={18} strokeWidth={1.1} color="#333" /></StripBtn>
    <StripBtn cls="mt-[8px]" active><SlidersHorizontal size={17} strokeWidth={1.1} color="#333" /></StripBtn>
    <StripBtn cls="mt-[8px]">
      <svg width="18" height="18" viewBox="0 0 18 18" fill="none" stroke="#333">
        <path d="M1.500 16.500v-11l4-4h8l3 3v3M1.500 16.500h6" />
        <path d="M10 16c-1-3 0-5 2-7 1 3 0 5-2 7zM13 17c1-3 2-4 4-5 0 3-1 5-4 5z" />
      </svg>
    </StripBtn>
    <StripBtn cls="mt-[8px]">
      <svg width="18" height="18" viewBox="0 0 18 18" fill="none" stroke="#333">
        <path d="M12 3l3 3-9 9-3-3zM9 6l3 3M3 3l2 2-2 2-2-2zM15 11l2 2-2 2-2-2z" />
      </svg>
    </StripBtn>
    <StripBtn cls="mt-[8px]">
      <svg width="18" height="18" viewBox="0 0 18 18" fill="none" stroke="#333">
        <path d="M1 2.500l6 2 6-2v6M1 2.500v12l6 2h2M7 4.500v12" />
        <circle cx="12.500" cy="12.500" r="3" />
        <path d="M15 15l2.500 2.500" />
      </svg>
    </StripBtn>
    <StripBtn cls="mt-[8px]"><CircleHelp size={17} strokeWidth={1.1} color="#333" /></StripBtn>
    <StripBtn cls="mt-[8px]"><Ellipsis size={18} strokeWidth={1.1} color="#333" /></StripBtn>
  </div>
)

const StatusItem = ({ w, sep = true, children }: { w: string; sep?: boolean; children: ReactNode }) => (
  <div className={`flex h-[14px] items-center whitespace-nowrap ${w} ${sep ? "border-r border-[#c9ccd0]" : ""}`}>{children}</div>
)

const StatusBar = () => (
  <div className="flex h-[20px] items-center border-t border-[#cfd1d4] bg-[#e5e8ec] text-[12px] text-[#333]">
    <StatusItem w="w-[81px] pl-[18px]">页面: 3/6</StatusItem>
    <StatusItem w="w-[64px] pl-[12px]">节: 1/1</StatusItem>
    <StatusItem w="w-[72px] pl-[12px]">列: 885</StatusItem>
    <StatusItem w="w-[77px] pl-[12px]">字数: 720</StatusItem>
    <StatusItem w="w-[84px] pl-[12px]" sep={false}>改写: 关闭</StatusItem>
    <StatusItem w="w-[71px]" sep={false}>修订: 关闭</StatusItem>
    <StatusItem w="w-[107px]">
      拼写检查: 打开
      <span className="ml-[6px]"><Caret /></span>
    </StatusItem>
    <StatusItem w="w-[50px] pl-[12px]" sep={false}>校对</StatusItem>
    <div className="ml-auto flex h-full items-center pr-[9px]">
      <svg width="16" height="14" viewBox="0 0 16 14" fill="none" stroke="#333">
        <path d="M1 7l3-5.500h8L15 7l-3 5.500H4z" />
        <circle cx="8" cy="7" r="2.500" />
      </svg>
      <span className="ml-[13px] flex"><Sep h="h-[14px]" /></span>
      <div className="ml-[7px] flex h-[20px] w-[24px] items-center justify-center bg-[#d3d5d8]">
        <svg width="11" height="13" viewBox="0 0 11 13" fill="none" stroke="#333">
          <path d="M.5 .5h10v12H.5zM3 4h5M3 7h3" />
        </svg>
      </div>
      <svg width="13" height="11" viewBox="0 0 13 11" fill="none" stroke="#333" className="ml-[12px]">
        <path d="M3 .5h10M5 5.500h8M3 10.500h10M0 .5h1.500M0 5.500h1.500M0 10.500h1.500" />
      </svg>
      <svg width="11" height="15" viewBox="0 0 11 15" fill="none" stroke="#333" className="ml-[22px]">
        <path d="M.5 .5l10 7-10 7z" />
      </svg>
      <Globe size={14} strokeWidth={1} color="#333" className="ml-[21px]" />
      <svg width="14" height="15" viewBox="0 0 14 15" fill="none" stroke="#333" className="ml-[16px]">
        <path d="M1 14l2-5 7-8c2-1 4 1 3 3l-8 8zM3 9l2 3" />
      </svg>
      <span className="ml-[12px] flex"><Sep h="h-[14px]" /></span>
      <svg width="14" height="16" viewBox="0 0 14 16" fill="none" stroke="#333" className="ml-[14px]">
        <path d="M.5 4V.5H4M10 .5h3.500V4M.5 12v3.500H4M10 15.500h3.500V12" />
        <rect x="4" y="4" width="6" height="8" />
      </svg>
      <span className="ml-[23px] w-[27px] whitespace-nowrap text-[13px] text-[#555]">80%</span>
      <span className="ml-[11px]"><Caret color="#555" /></span>
      <Minus size={13} strokeWidth={2} color="#333" className="ml-[21px]" />
      <div className="relative ml-[13px] flex h-[3px] w-[106px]">
        <span className="h-full w-[43px] bg-[#2f5be7]" />
        <span className="h-full flex-1 bg-[#b5b7ba]" />
        <span className="absolute left-[38px] -top-[3px] h-[9px] w-[9px] rounded-full border-2 border-white bg-[#888]" />
      </div>
      <Plus size={13} strokeWidth={1.8} color="#333" className="ml-[13px]" />
      <Maximize size={13} strokeWidth={1} color="#333" className="ml-[19px]" />
    </div>
  </div>
)

const Sogou = () => (
  <div className="absolute left-[736px] top-[1014px] flex h-[22px] w-[224px] items-center border-r border-t border-[#c9dcf2] bg-[#f5f9fd] text-[#0a6fdc]">
    <span className="ml-[1px] flex h-[22px] w-[29px] -rotate-6 items-center justify-center rounded-[3px] bg-[#f0541e] text-[20px] font-bold italic leading-none text-white">S</span>
    <span className="ml-[5px] text-[14px] font-bold">中</span>
    <span className="ml-[7px] text-[14px] font-bold leading-none">°,</span>
    <svg width="12" height="17" viewBox="0 0 12 17" fill="#0a6fdc" className="ml-[11px]">
      <rect x="3.500" y="0" width="5" height="10" rx="2.500" />
      <path d="M1 7c0 6 10 6 10 0M6 12v4" fill="none" stroke="#0a6fdc" strokeWidth="1.500" />
    </svg>
    <svg width="16" height="16" viewBox="0 0 16 16" className="ml-[12px]">
      <rect width="16" height="16" rx="2" fill="#0a6fdc" />
      <path d="M3 4h10M3 7h10M3 10h10M3 13h10" stroke="#fff" strokeDasharray="2 1" />
    </svg>
    <svg width="16" height="17" viewBox="0 0 16 17" fill="#0a6fdc" className="ml-[9px]">
      <path d="M4 0l4 2 4-2 4 4-3 3v10H3V7L0 4z" />
    </svg>
    <svg width="17" height="17" viewBox="0 0 17 17" className="ml-[7px]">
      <circle cx="8.500" cy="9.500" r="7.500" fill="#0a6fdc" />
      <path d="M8.500 0v3" stroke="#0a6fdc" strokeWidth="2" />
      <path d="M4 9.500h3M5.500 8v3" stroke="#fff" />
      <circle cx="11.500" cy="9.500" r="1.500" fill="none" stroke="#fff" />
    </svg>
    <svg width="15" height="15" viewBox="0 0 15 15" fill="#0a6fdc" className="ml-[8px]">
      <rect width="6.500" height="6.500" rx="2" />
      <rect x="8.500" width="6.500" height="6.500" rx="2" />
      <rect y="8.500" width="6.500" height="6.500" rx="2" />
      <rect x="8.500" y="8.500" width="6.500" height="6.500" rx="2" />
    </svg>
    <svg width="14" height="17" viewBox="0 0 14 17" className="ml-[8px]">
      <path d="M7 0l3 3 4 8-3 5H3l-3-5 4-8z" fill="#0a6fdc" />
      <circle cx="7" cy="8" r="2.500" fill="#fff" />
    </svg>
  </div>
)

const Watermark = () => (
  <div className="pointer-events-none absolute left-[1500px] top-[984px] flex h-[48px] w-[155px] items-start opacity-85">
    <svg width="44" height="46" viewBox="0 0 44 46" fill="none" className="shrink-0">
      <path d="M36 1C20 6 6 16 3 28c-2 9 4 16 13 16 8 0 16-4 20-11" stroke="#6fa6e0" strokeWidth="5" />
      <path d="M30 14c-9 1-16 6-16 14 0 5 5 8 10 6 6-2 9-6 9-11" stroke="#7cc67c" strokeWidth="5" />
    </svg>
    <div className="ml-[1px] flex flex-col">
      <span className="whitespace-nowrap text-[21px] font-bold leading-[26px] text-[#4b8fd6]">极光下载站</span>
      <span className="whitespace-nowrap text-[18px] leading-[22px] text-[#6cc072]">www.xz7.com</span>
    </div>
  </div>
)

const App = () => {
  return (
    <div className="relative flex h-[1036px] w-[1660px] flex-col overflow-hidden bg-[#e4e6eb] font-['Noto_Sans','Noto_Sans_CJK_SC',sans-serif]">
      <TabBar />
      <Toolbar />
      <Ribbon />
      <div className="flex h-[855px]">
        <LeftPanel />
        <Canvas />
        <PropsPanel />
        <Strip />
      </div>
      <StatusBar />
      <Sogou />
      <Watermark />
    </div>
  )
}

export default App
